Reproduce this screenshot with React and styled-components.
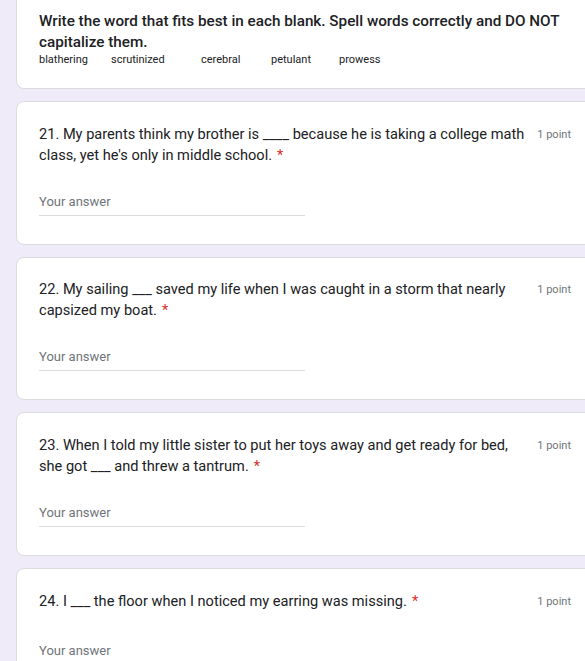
import React from "react";
import styled, { createGlobalStyle } from "styled-components";

const GlobalStyle = createGlobalStyle`
  html, body {
    margin: 0;
    padding: 0;
    background: #f0ebf8;
    overflow: hidden;
  }
  body {
    font-family: Roboto, "Liberation Sans", Arial, sans-serif;
    color: #202124;
  }
`;

const questions = [
  {
    num: 21,
    text: "My parents think my brother is ____ because he is taking a college math class, yet he's only in middle school.",
  },
  {
    num: 22,
    text: "My sailing ___ saved my life when I was caught in a storm that nearly capsized my boat.",
  },
  {
    num: 23,
    text: "When I told my little sister to put her toys away and get ready for bed, she got ___ and threw a tantrum.",
  },
  {
    num: 24,
    text: "I ___ the floor when I noticed my earring was missing.",
  },
];

const words = ["blathering", "scrutinized", "cerebral", "petulant", "prowess"];

const App = () => {
  return (
    <>
      <GlobalStyle />
      <Page>
        <HeaderCard>
          <HeaderTitle>
            Write the word that fits best in each blank. Spell words correctly
            and DO NOT capitalize them.
          </HeaderTitle>
          <WordBank>
            {words.map((w) => (
              <span key={w}>{w}</span>
            ))}
          </WordBank>
        </HeaderCard>

        {questions.map((q) => (
          <Card key={q.num}>
            <QuestionRow>
              <QuestionTitle>
                {q.num}. {q.text}
                <Required>*</Required>
              </QuestionTitle>
              <Points>1 point</Points>
            </QuestionRow>
            <AnswerField>Your answer</AnswerField>
          </Card>
        ))}
      </Page>
    </>
  );
};

export default App;

const Page = styled.div`
  display: flex;
  flex-direction: column;
  gap: 12px;
  padding: 0 0 0 16px;
  width: 580px;
`;

const Card = styled.div`
  background: #fff;
  border: 1px solid #dadce0;
  border-radius: 8px;
  padding: 21.5px 24px 28.2px 22px;
`;

const HeaderCard = styled(Card)`
  border-top: none;
  border-radius: 0 0 8px 8px;
  padding-top: 10.5px;
  padding-bottom: 21.5px;
`;

const HeaderTitle = styled.div`
  font-size: 15.25px;
  line-height: 21px;
  font-weight: 500;
  color: #202124;
`;

const WordBank = styled.div`
  display: grid;
  grid-template-columns: 72px 90px 70px 68px auto;
  font-size: 11px;
  line-height: 14px;
  color: #202124;
`;

const QuestionRow = styled.div`
  display: flex;
  align-items: flex-start;
  min-height: 24px;
`;

const QuestionTitle = styled.div`
  flex: 1;
  font-size: 14.6px;
  line-height: 21px;
  color: #202124;
`;

const Required = styled.span`
  color: #d93025;
  margin-left: 5px;
`;

const Points = styled.div`
  margin-left: 8px;
  padding-top: 4px;
  font-size: 11px;
  line-height: 14px;
  color: #70757a;
  white-space: nowrap;
`;

const AnswerField = styled.div`
  margin-top: 28px;
  width: 266px;
  font-size: 13px;
  line-height: 16px;
  color: #70757a;
  padding-bottom: 5px;
  border-bottom: 1px solid #dadce0;
`;
